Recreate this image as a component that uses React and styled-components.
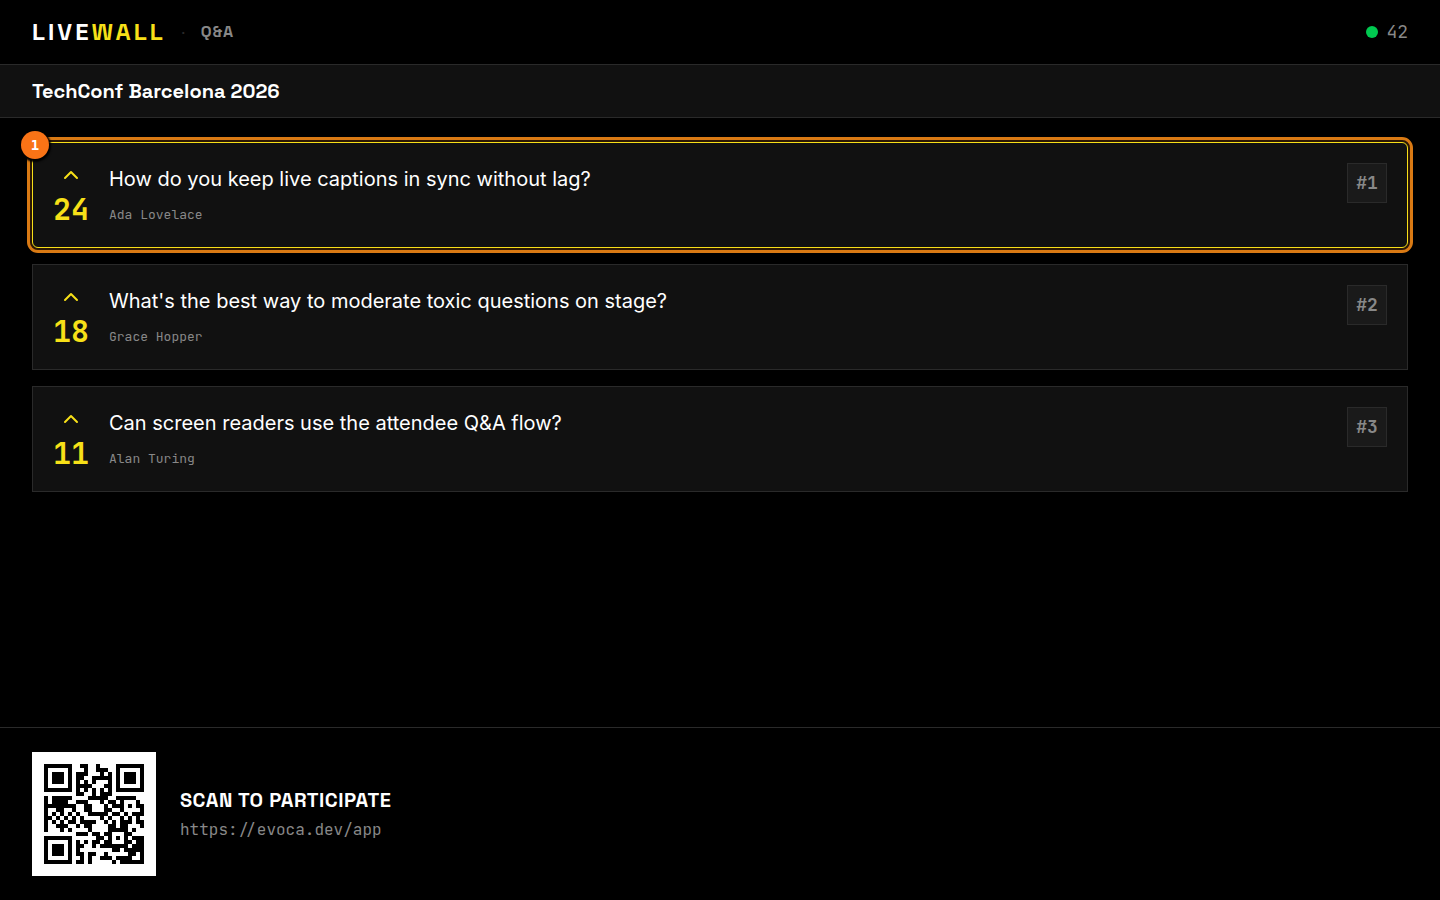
import React from 'react'
import styled, { createGlobalStyle } from 'styled-components'
import { ChevronUp } from 'lucide-react'

const JOIN_URL = 'https://evoca.dev/app'

const questions = [
  { id: 1, votes: 24, text: 'How do you keep live captions in sync without lag?', author: 'Ada Lovelace' },
  { id: 2, votes: 18, text: "What's the best way to moderate toxic questions on stage?", author: 'Grace Hopper' },
  { id: 3, votes: 11, text: 'Can screen readers use the attendee Q&A flow?', author: 'Alan Turing' }
]

// QR version 2, level M: 28 data codewords, 16 error correction codewords
const QR_SIZE = 25
const QR_DATA = 28
const QR_EC = 16
const QR_FORMAT = '101111001111100' // level M, mask 2

const gfMul = (a, b) => {
  let result = 0
  for (let i = 7; i >= 0; i--) {
    result = (result << 1) ^ ((result >>> 7) * 0x11d)
    result ^= ((b >>> i) & 1) * a
  }
  return result
}

const errorCorrection = data => {
  const divisor = Array(QR_EC).fill(0)
  divisor[QR_EC - 1] = 1
  let root = 1
  for (let i = 0; i < QR_EC; i++) {
    for (let j = 0; j < QR_EC; j++) {
      divisor[j] = gfMul(divisor[j], root)
      if (j + 1 < QR_EC)
        divisor[j] ^= divisor[j + 1]
    }
    root = gfMul(root, 2)
  }

  const result = Array(QR_EC).fill(0)
  data.forEach(byte => {
    const factor = byte ^ result.shift()
    result.push(0)
    divisor.forEach((d, i) => { result[i] ^= gfMul(d, factor) })
  })
  return result
}

const encode = text => {
  const toBits = (value, length) => value.toString(2).padStart(length, '0')
  let bits = '0100' + toBits(text.length, 8)
  for (const char of text) bits += toBits(char.charCodeAt(0), 8)
  bits += '0000'

  const data = bits.match(/.{8}/g).map(b => parseInt(b, 2))
  for (let pad = 0xec; data.length < QR_DATA; pad ^= 0xec ^ 0x11) data.push(pad)

  return [...data, ...errorCorrection(data)].map(b => toBits(b, 8)).join('')
}

const buildQr = text => {
  const grid = Array.from({ length: QR_SIZE }, () => Array(QR_SIZE).fill(null))
  const last = QR_SIZE - 1

  for (let i = 0; i < QR_SIZE; i++) {
    grid[6][i] = i % 2 === 0
    grid[i][6] = i % 2 === 0
  }

  // finder patterns with their quiet border
  const corners = [[3, 3], [3, last - 3], [last - 3, 3]]
  corners.forEach(([cy, cx]) => {
    for (let dy = -4; dy <= 4; dy++) {
      for (let dx = -4; dx <= 4; dx++) {
        const dist = Math.max(Math.abs(dx), Math.abs(dy))
        const y = cy + dy
        const x = cx + dx
        if (y >= 0 && y <= last && x >= 0 && x <= last)
          grid[y][x] = dist !== 2 && dist !== 4
      }
    }
  })

  // alignment pattern
  for (let dy = -2; dy <= 2; dy++) {
    for (let dx = -2; dx <= 2; dx++) {
      grid[18 + dy][18 + dx] = Math.max(Math.abs(dx), Math.abs(dy)) !== 1
    }
  }

  // format bits, both copies
  const alongRow = [0, 1, 2, 3, 4, 5, 7, 8]
  const upColumn = [7, 5, 4, 3, 2, 1, 0]
  for (let i = 0; i < 15; i++) {
    const bit = QR_FORMAT[i] === '1'
    if (i < 8) grid[8][alongRow[i]] = bit
    else grid[upColumn[i - 8]][8] = bit
    if (i < 7) grid[last - i][8] = bit
    else grid[8][last - 14 + i] = bit
  }
  grid[last - 7][8] = true

  const bits = encode(text)
  let index = 0
  let upward = true
  for (let right = last; right > 0; right -= 2) {
    if (right === 6) right = 5
    for (let i = 0; i < QR_SIZE; i++) {
      const y = upward ? last - i : i
      for (const x of [right, right - 1]) {
        if (grid[y][x] === null)
          grid[y][x] = (bits[index++] === '1') !== (x % 3 === 0)
      }
    }
    upward = !upward
  }
  return grid
}

const QrCode = ({ value }) => {
  const path = buildQr(value)
    .flatMap((row, y) => row.map((dark, x) => (dark ? `M${x} ${y}h1v1h-1z` : '')))
    .join('')

  return (
    <QrFrame>
      <QrDrawing
        viewBox={`0 0 ${QR_SIZE} ${QR_SIZE}`}
        shapeRendering="crispEdges"
        role="img"
        aria-label="QR code"
      >
        <path d={path} />
      </QrDrawing>
    </QrFrame>
  )
}

const Question = ({ question, rank, highlighted }) => (
  <Card $highlighted={highlighted}>
    {highlighted && <StepBadge>1</StepBadge>}
    <Votes>
      <ChevronUp size={24} strokeWidth={2} />
      <VoteCount>{question.votes}</VoteCount>
    </Votes>
    <Body>
      <QuestionText>{question.text}</QuestionText>
      <Author>{question.author}</Author>
    </Body>
    <Rank>#{rank}</Rank>
  </Card>
)

const App = () => (
  <Page>
    <GlobalStyle />
    <Header>
      <Brand>
        <Logo>LIVE<span>WALL</span></Logo>
        <Dot>·</Dot>
        <Mode>Q&amp;A</Mode>
      </Brand>
      <Online>
        <OnlineDot />
        42
      </Online>
    </Header>
    <EventBar>
      <EventTitle>TechConf Barcelona 2026</EventTitle>
    </EventBar>
    <List>
      {questions.map((question, i) => (
        <Question
          key={question.id}
          question={question}
          rank={i + 1}
          highlighted={i === 0}
        />
      ))}
    </List>
    <Footer>
      <QrCode value={JOIN_URL} />
      <div>
        <JoinTitle>SCAN TO PARTICIPATE</JoinTitle>
        <JoinUrl>{JOIN_URL}</JoinUrl>
      </div>
    </Footer>
  </Page>
)

export default App

const display = "'Space Grotesk', Inter, sans-serif"
const mono = "'JetBrains Mono', 'Liberation Mono', monospace"

const GlobalStyle = createGlobalStyle`
  * {
    box-sizing: border-box;
    margin: 0;
    padding: 0;
  }

  body {
    background: #000;
    color: #fff;
    font-family: Inter, sans-serif;
    -webkit-font-smoothing: antialiased;
  }
`

const Page = styled.div`
  display: flex;
  flex-direction: column;
  min-height: 100vh;
`

const Header = styled.header`
  display: flex;
  align-items: center;
  justify-content: space-between;
  padding: 16px 32px;
  border-bottom: 1px solid #2a2a2a;
`

const Brand = styled.div`
  display: flex;
  align-items: center;
  gap: 16px;
`

const Logo = styled.div`
  font-family: ${display};
  font-size: 24px;
  font-weight: 700;
  line-height: 32px;
  letter-spacing: 3px;

  span {
    color: #f7e018;
  }
`

const Dot = styled.span`
  color: #2a2a2a;
  font-family: ${display};
  font-size: 16px;
  line-height: 24px;
`

const Mode = styled.span`
  color: #888;
  font-family: ${display};
  font-size: 16px;
  font-weight: 700;
  line-height: 24px;
  letter-spacing: 1px;
`

const Online = styled.div`
  display: flex;
  align-items: center;
  gap: 8px;
  color: #888;
  font-family: ${mono};
  font-size: 18px;
  line-height: 28px;
`

const OnlineDot = styled.span`
  width: 12px;
  height: 12px;
  border-radius: 50%;
  background: #00c950;
`

const EventBar = styled.div`
  padding: 12px 32px;
  background: #111;
  border-bottom: 1px solid #2a2a2a;
`

const EventTitle = styled.h1`
  font-family: ${display};
  font-size: 20px;
  font-weight: 600;
  line-height: 28px;
`

const List = styled.ul`
  flex: 1;
  display: flex;
  flex-direction: column;
  gap: 16px;
  padding: 24px 32px;
  list-style: none;
`

const Card = styled.li`
  position: relative;
  display: flex;
  align-items: flex-start;
  gap: 20px;
  padding: 20px;
  background: #111;
  border: 1px solid ${props => (props.$highlighted ? '#f7e018' : '#2a2a2a')};
  border-radius: ${props => (props.$highlighted ? '6px' : '0')};
  outline: ${props => (props.$highlighted ? '3px solid #d97a14' : 'none')};
  outline-offset: 2px;
  box-shadow: ${props => (props.$highlighted ? '0 0 0 2px #2c1805' : 'none')};
`

const StepBadge = styled.span`
  position: absolute;
  top: -12px;
  left: -12px;
  display: flex;
  align-items: center;
  justify-content: center;
  width: 28px;
  height: 28px;
  border-radius: 50%;
  background: #f97316;
  box-shadow: 0 1px 2px 2px #000;
  font-family: 'DejaVu Sans Mono', monospace;
  font-size: 14px;
  font-weight: 700;
  line-height: 20px;
`

const Votes = styled.div`
  display: flex;
  flex-direction: column;
  align-items: center;
  gap: 4px;
  color: #f7e018;

  svg {
    display: block;
  }
`

const VoteCount = styled.span`
  font-family: ${mono};
  font-size: 30px;
  font-weight: 700;
  line-height: 36px;
`

const Body = styled.div`
  flex: 1;
  min-width: 0;
`

const QuestionText = styled.p`
  font-size: 20px;
  line-height: 32px;
`

const Author = styled.p`
  margin-top: 8px;
  color: #888;
  font-family: ${mono};
  font-size: 13px;
  line-height: 24px;
`

const Rank = styled.div`
  display: flex;
  align-items: center;
  justify-content: center;
  width: 40px;
  height: 40px;
  border: 1px solid #2a2a2a;
  background: #1a1a1a;
  color: #888;
  font-family: ${mono};
  font-size: 18px;
  font-weight: 700;
  line-height: 28px;
`

const Footer = styled.footer`
  display: flex;
  align-items: center;
  gap: 24px;
  padding: 24px 32px;
  border-top: 1px solid #2a2a2a;
`

const QrFrame = styled.div`
  padding: 12px;
  background: #fff;
`

const QrDrawing = styled.svg`
  display: block;
  width: 100px;
  height: 100px;
`

const JoinTitle = styled.h2`
  font-family: ${display};
  font-size: 20px;
  font-weight: 700;
  line-height: 28px;
  letter-spacing: 0.025em;
`

const JoinUrl = styled.p`
  margin-top: 4px;
  color: #888;
  font-family: ${mono};
  font-size: 16px;
  line-height: 24px;
`
